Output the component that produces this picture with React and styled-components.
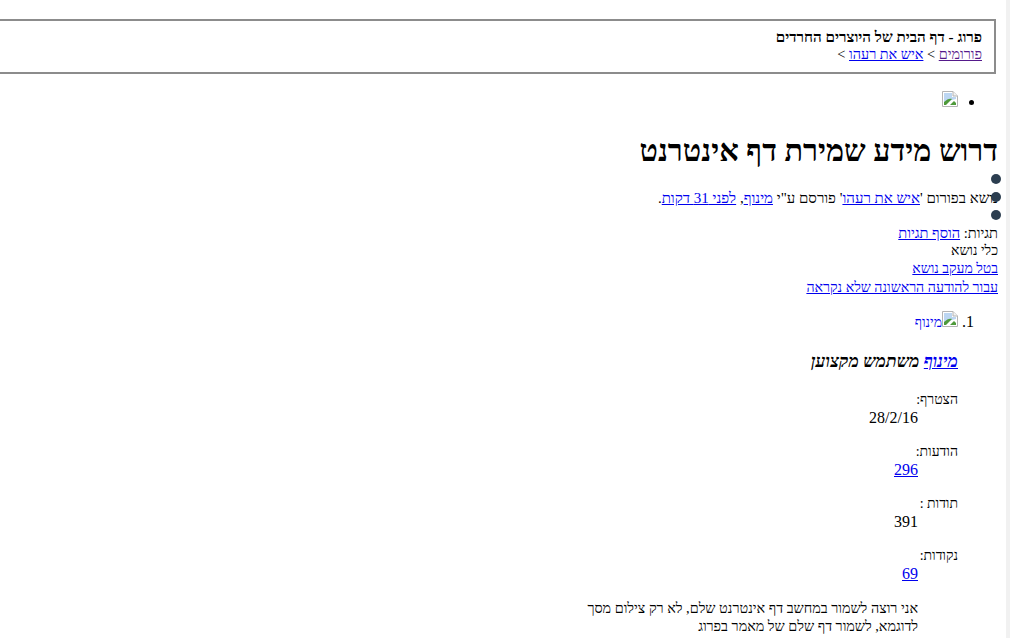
import React from 'react';
import styled, {createGlobalStyle} from 'styled-components';

const Global = createGlobalStyle`
  html, body { margin:0; padding:0; height:100%; overflow:hidden; background:#fff; }
  body { font-family:"Liberation Serif", "Noto Sans", serif; font-size:16px; color:#000; }
  a { color:#0000ee; }
`
const Page = styled.div`
  display:flex;
  height:638px;
`
const Main = styled.div`
  flex:1;
  min-width:0;
  overflow:hidden;
  direction:rtl;
  padding:19px 8px 0 0;
`
const Scrollbar = styled.div`
  width:4px;
  background:#f1f1f1;
`
const Header = styled.div`
  width:1100px;
  box-sizing:border-box;
  margin-right:2px;
  height:55px;
  padding:7px 12px;
  border:2px solid #8c8c8c;
  font-size:14.4px;
  line-height:18px;
`
const SiteName = styled.div`
  font-weight:bold;
  font-size:15.2px;
  line-height:17px;
`
const Visited = styled.a`
  color:#551a8b;
`
const TopList = styled.ul`
  margin:17px 0 16px;
  padding:0 40px 0 0;
`
const Title = styled.h1`
  font-size:30.5px;
  line-height:37px;
  margin:22px 0 20px;
`
const Meta = styled.div`
  position:relative;
  font-size:14px;
  line-height:18px;
`
const Dots = styled.div`
  position:absolute;
  top:-15px;
  right:-3px;
  display:flex;
  flex-direction:column;
  gap:8px;
`
const Dot = styled.span`
  display:block;
  width:10px;
  height:10px;
  border-radius:50%;
  background:#2c3e50;
`
const Line = styled.div`
  font-size:${props => props.$size || 14}px;
`
const Posted = styled(Line)`
  margin-top:-1px;
  margin-bottom:17px;
`
const Posts = styled.ol`
  margin:15px 0 16px;
  padding:0 40px 0 0;
  font-size:16px;
  line-height:18px;
`
const AvatarLink = styled.a`
  font-size:14px;
  text-decoration:none;
`
const UserTitle = styled.h4`
  font-size:17.5px;
  line-height:18px;
  margin:20px 0 21px;
`
const Stats = styled.dl`
  margin:16px 0;
`
const Label = styled.dt`
  font-size:14px;
`
const Value = styled.dd`
  margin:0 40px 0 0;
`
const Message = styled.div`
  margin-right:40px;
  width:335px;
  font-size:14.35px;
`

function BrokenImage(){
  return(
    <svg width="16" height="16" viewBox="0 0 16 16">
      <path d="M0.5 0.5H11L15.5 5V15.5H0.5Z" fill="#fff" stroke="#b4b4b4"/>
      <path d="M11 0.5V5H15.5" fill="#f2f2f2" stroke="#b4b4b4"/>
      <path d="M2 2H10V6H14V8L2 11Z" fill="#bcd6f2"/>
      <path d="M2 14V11C5 8 8 7 10 8L4 14Z" fill="#4f9a3a"/>
      <path d="M8 14L12 10L14 12V14Z" fill="#4f9a3a"/>
    </svg>
  )
}

export default function App(){
  const stats = [
    {label:'הצטרף:', value:'28/2/16'},
    {label:'הודעות:', value:'296', link:true},
    {label:'תודות :', value:'391'},
    {label:'נקודות:', value:'69', link:true},
  ];

  return(
    <Page>
      <Global />
      <Main>
        <Header>
          <SiteName>פרוג - דף הבית של היוצרים החרדים</SiteName>
          <div><Visited href="#">פורומים</Visited> &gt; <a href="#">איש את רעהו</a> &gt;</div>
        </Header>
        <TopList>
          <li><BrokenImage /></li>
        </TopList>
        <Title>דרוש מידע שמירת דף אינטרנט</Title>
        <Meta>
          <Dots><Dot /><Dot /><Dot /></Dots>
          <Posted $size={15}>נושא בפורום '<a href="#">איש את רעהו</a>' פורסם ע"י <a href="#">מינוף</a>, <a href="#">לפני 31 דקות</a>.</Posted>
          <Line $size={14.6}>תגיות: <a href="#">הוסף תגיות</a></Line>
          <Line>כלי נושא</Line>
          <Line><a href="#">בטל מעקב נושא</a></Line>
          <Line $size={14.15}><a href="#">עבור להודעה הראשונה שלא נקראה</a></Line>
        </Meta>
        <Posts>
          <li>
            <AvatarLink href="#"><BrokenImage />מינוף</AvatarLink>
            <UserTitle><i><a href="#">מינוף</a> משתמש מקצוען</i></UserTitle>
            {stats.map(s => (
              <Stats key={s.label}>
                <Label>{s.label}</Label>
                <Value>{s.link ? <a href="#">{s.value}</a> : s.value}</Value>
              </Stats>
            ))}
            <Message>אני רוצה לשמור במחשב דף אינטרנט שלם, לא רק צילום מסך לדוגמא, לשמור דף שלם של מאמר בפרוג</Message>
          </li>
        </Posts>
      </Main>
      <Scrollbar />
    </Page>
  )
}
